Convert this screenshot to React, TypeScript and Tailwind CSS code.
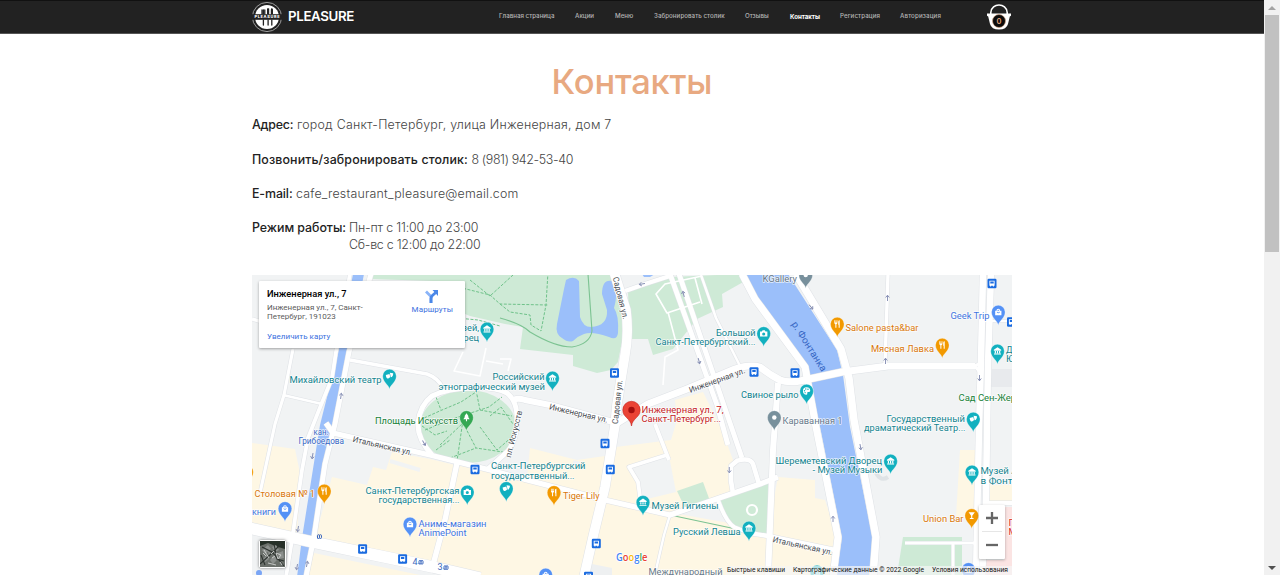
import React from 'react';

const TEAL = '#12838f';
const ORANGE = '#d9770a';
const BLUE = '#3f74e0';
const GREY = '#66788a';

type PinKind = 'museum' | 'theatre' | 'camera' | 'food' | 'bag' | 'tree' | 'dot' | 'palette' | 'drink';
type PinProps = { x: number; y: number; fill: string; kind: PinKind };

const glyphs: Record<PinKind, React.ReactNode> = {
  museum: (
    <g>
      <path d="M-4-1.4 0-4 4-1.4V-.4H-4Z" />
      <path d="M-3 0h1.3v2.4H-3zM-.65 0h1.3v2.4h-1.3zM1.7 0H3v2.4H1.7zM-3.8 2.8h7.6v1h-7.6z" />
    </g>
  ),
  theatre: (
    <g>
      <path d="M-4-1.2 0-2.2.8 1.2Q-.8 3.6-2.8 2.4-3.8 1.2-4-1.2Z" />
      <path d="M.2-3.6 4-3Q4 1 1.4 1.4L.6-2.4Z" />
    </g>
  ),
  camera: <path fillRule="evenodd" d="M-4-2.2h2l.8-1.2h2.4L2-2.2h2v5.4h-8ZM0-1.2A1.7 1.7 0 1 0 0 2.2 1.7 1.7 0 0 0 0-1.2Z" />,
  food: <path d="M-3.2-4h.7v2.4h.6V-4h.7v2.4h.6V-4h.7v3q0 1-1.1 1.3V4h-1.1V.3Q-3.2 0-3.2-1ZM1-2.4Q1.2-4 2.6-4v8H1.5V.8H1Z" />,
  bag: <path fillRule="evenodd" d="M-3.4-1.4H-2A2 2 0 0 1 2-1.4h1.4v4.8h-6.8ZM-1-1.4h2A1 1 0 0 0-1-1.4ZM-1.8 0q1.8 2.6 3.6 0l-.7-.2Q0 1.3-1.1-.2Z" />,
  tree: <path d="M0-4.6 2.4-1H1.5L3.4 2H.6v2H-.6V2h-2.8L-1.5-1h-.9Z" />,
  dot: <circle r="2.4" />,
  palette: (
    <g>
      <path d="M0-4A4 4 0 0 0 0 4Q1.4 3.600.6 2.200.6 1 2.200 1.200 4 1.200 4-.4 3.600-4 0-4Z" />
      <g fill="#12b0bf"><circle cx="-2.300" cy="-.2" r=".8" /><circle cx="-.9" cy="-2.200" r=".8" /><circle cx="1.500" cy="-2" r=".8" /><circle cx="-1.600" cy="1.800" r=".7" /></g>
    </g>
  ),
  drink: <path d="M-3.4-3.6h6.8L.6.2v2.6H2v1h-4v-1h1.4V.2Z" />,
};

function Pin({ x, y, fill, kind }: PinProps) {
  return (
    <g transform={`translate(${x} ${y})`}>
      <path d="M0 13.2C-.8 8.6-6.8 6.4-6.8 0a6.8 6.8 0 0 1 13.6 0C6.8 6.4.8 8.6 0 13.2Z" fill={fill} stroke="#fff" strokeOpacity=".6" strokeWidth=".5" />
      <g fill="#fff" transform="scale(.92)">{glyphs[kind]}</g>
    </g>
  );
}

const P = '#12b0bf';
const O = '#f29900';
const B = '#5491f5';
const pins: PinProps[] = [
  { x: 389.5, y: 376, fill: P, kind: 'theatre' },
  { x: 487, y: 329, fill: P, kind: 'museum' },
  { x: 552.5, y: 378, fill: P, kind: 'museum' },
  { x: 466.5, y: 417.5, fill: '#34a853', kind: 'tree' },
  { x: 763.7, y: 333.5, fill: P, kind: 'camera' },
  { x: 837.3, y: 324, fill: O, kind: 'food' },
  { x: 942.3, y: 345, fill: O, kind: 'food' },
  { x: 805.7, y: 275, fill: '#78909c', kind: 'dot' },
  { x: 998.3, y: 312, fill: B, kind: 'bag' },
  { x: 997.5, y: 351, fill: P, kind: 'museum' },
  { x: 806.6, y: 391, fill: P, kind: 'palette' },
  { x: 774.3, y: 417.5, fill: '#78909c', kind: 'dot' },
  { x: 973.3, y: 419, fill: P, kind: 'theatre' },
  { x: 890.6, y: 461, fill: P, kind: 'museum' },
  { x: 972, y: 472, fill: P, kind: 'museum' },
  { x: 971.7, y: 515.5, fill: O, kind: 'drink' },
  { x: 324.3, y: 491, fill: O, kind: 'food' },
  { x: 246.5, y: 472, fill: O, kind: 'food' },
  { x: 285, y: 508.5, fill: B, kind: 'bag' },
  { x: 467.3, y: 492, fill: P, kind: 'camera' },
  { x: 410, y: 524, fill: B, kind: 'bag' },
  { x: 506.3, y: 488.5, fill: P, kind: 'theatre' },
  { x: 554, y: 492.5, fill: O, kind: 'food' },
  { x: 643, y: 502.3, fill: P, kind: 'museum' },
  { x: 749, y: 528, fill: P, kind: 'museum' },
  { x: 545.7, y: 575, fill: B, kind: 'bag' },
  { x: 968.5, y: 569.5, fill: B, kind: 'bag' },
  { x: 817, y: 572, fill: P, kind: 'museum' },
];

/* text, x, baseline, drawn width, colour */
const labels: [string, number, number, number, string][] = [
  ['Михайловский театр', 289.5, 382.5, 92, TEAL],
  ['Музей,', 450, 331, 29, TEAL],
  ['Дворец', 446, 340.5, 33, TEAL],
  ['Российский', 492.5, 380.2, 52, TEAL],
  ['этнографический музей', 438.5, 389.5, 106.5, TEAL],
  ['Площадь Искусств', 375, 424.2, 83, '#188038'],
  ['Большой', 716, 335.8, 39.5, TEAL],
  ['Санкт-Петербургский...', 655.5, 345, 100, TEAL],
  ['KGallery', 762.5, 282, 34.5, GREY],
  ['Salone pasta&bar', 845.5, 331, 73, ORANGE],
  ['Мясная Лавка', 871, 352, 63, ORANGE],
  ['Geek Trip', 950.5, 318.7, 39, BLUE],
  ['Д', 1006, 352.7, 6.5, TEAL],
  ['Ю', 1006, 362, 9, TEAL],
  ['Свиное рыло', 741, 397.5, 57.5, TEAL],
  ['Караванная 1', 782.5, 424, 60, GREY],
  ['Сад Сен-Жермен', 958.5, 401, 75, '#188038'],
  ['Государственный', 886.5, 421.5, 78.5, TEAL],
  ['драматический Театр...', 864, 430.5, 101.5, TEAL],
  ['Шереметевский Дворец', 775.5, 463.5, 106.5, TEAL],
  ['- Музей Музыки', 812.5, 472.7, 70, TEAL],
  ['Музей А', 980.5, 474.3, 37, TEAL],
  ['в Фонтан', 980.5, 483.7, 43, TEAL],
  ['Union Bar', 923, 522.2, 40.5, ORANGE],
  ['П', 1008.5, 525.5, 7, '#d93025'],
  ['М', 1008.5, 535, 8, '#d93025'],
  ['Столовая № 1', 254.5, 497, 60.5, ORANGE],
  ['книги', 252, 514.7, 24, BLUE],
  ['Санкт-Петербургская', 365.5, 494, 94, TEAL],
  ['государственная...', 378.5, 503.3, 81, TEAL],
  ['Аниме-магазин', 418.5, 526.5, 68, BLUE],
  ['AnimePoint', 418.5, 535.7, 48, BLUE],
  ['Санкт-Петербургский', 491, 469, 94.5, TEAL],
  ['государственный...', 491, 478.5, 83.5, TEAL],
  ['Tiger Lily', 563, 499.2, 36.5, ORANGE],
  ['Музей Гигиены', 651.5, 509, 67, TEAL],
  ['Русский Левша', 673, 534.7, 67.5, TEAL],
  ['Международный', 648.5, 575.3, 74, '#66788a'],
  ['Инженерная ул., 7,', 641.5, 412.7, 82, '#c5221f'],
  ['Санкт-Петербург...', 641.5, 422, 79.5, '#c5221f'],
];

/* text, centre x, centre y, rotation, drawn width */
const streets: [string, number, number, number, number][] = [
  ['Садовая ул.', 620.5, 298, 76, 43],
  ['Садовая ул.', 617.5, 402, -84, 44],
  ['Инженерная ул.', 578.5, 413.5, 13, 60],
  ['Инженерная ул.', 717, 380.5, -20, 59],
  ['Итальянская ул.', 382.5, 446, 13, 61],
  ['Итальянская ул.', 802.5, 546, 12.5, 61],
  ['пл. Искусств', 514, 434, -76, 48],
];

/* Buses and tram stops */
const stops: [number, number][] = [
  [614.5, 373], [754, 372], [795, 373], [992, 283.5], [1011.5, 322], [475, 469.5], [605, 443.5],
  [610.3, 469.5], [362.6, 549], [402.6, 559], [596.3, 543.5], [588.5, 576.5],
];

const arrows: [number, number, number][] = [
  [811, 307, 140], [887.5, 298, 0], [885.5, 361, 0], [979.5, 378, 180], [642, 284, 260],
  [683.5, 294, -15], [699, 361, 165], [341, 396, 8], [312.5, 456, 190], [298, 529, 190],
  [307, 564, 10], [297, 567, 190], [729.3, 470, 180], [860.5, 447, 170], [833, 519, 0], [424, 443, 150],
];

const roads: [string, number][] = [
  ['M350 274 336 352 332 378 319 410 308 438 302 470 292 540 286 577', 3.8],
  ['M371 274 349 352 335 424 325 464 314 537 306 577', 5],
  ['M293 349 284 395 275 424 260 493', 3.2],
  ['M283 395 322 404', 2.6],
  ['M252 319 262 322', 3.4],
  ['M350 360 427 374Q438 378 443 388', 3.6],
  ['M432 455Q417 438 418 423 420 405 432 396 448 388 472 388 496 387 507 393 516 400 517 415 518 438 508 451 496 462 488 469', 5],
  ['M513 401Q516 397 525 400L550 405 617 423', 6],
  ['M617 423 648 404 687 389 735 369Q750 364 760 367 770 375 780 380 788 383 800 381L842 372 888 366H975', 7],
  ['M972 366Q979 366 983 359M972 366Q978 367 980 374', 3],
  ['M326 423 333 433 364 440 430 455 490 470 527 480 605 500 670 515 760 484 778 477', 5.2],
  ['M457 463 445 520 433 565', 5.4],
  ['M249 528 317 543 380 556 433 567 480 578', 11.5],
  ['M614 272 626 310Q629 335 625 355L617 404 615 425 605 487 593 537 584 577', 9.5],
  ['M670 274 717 405 728 445', 5],
  ['M679 274 730 423 742 458', 5],
  ['M625 291 645 284 670 276', 4.4],
  ['M701 275 716 318 740 366', 2.6],
  ['M742 274 755 299 805 367 816 427 838 537 833 577', 7],
  ['M796 274 841 349 849 378 854 420 876 537 873 577', 7.4],
  ['M888 274 885 364', 3.4],
  ['M778 383 773 450 768 577', 6],
  ['M983 274 981 360 979 430 976 577', 6.5],
  ['M991 274 988 365 987 430 986 500 982 577', 6.5],
  ['M984 503H1013', 4],
  ['M983 321H1013', 2.3],
  ['M738 460 731 466 731 481 733 493M736 461Q750 457 753 464L759 484', 4.6],
  ['M669 460 655 424M667 455 629 467 638 482 641 504', 3.8],
  ['M718 500Q726 522 734 527L749 533', 4],
  ['M670 515 664 535 656 570', 2.4],
  ['M749 533 768 536 835 550', 4.4],
  ['M905 543H974M953 543V575', 3],
];

const parkPaths =
  'M457 318 478 320 500 326M450 285 490 295 500 304 548 305M500 304 510 312 530 315 531 325 541 331M548 272 546 305 541 331M470 280 490 296 513 275M424 418 442 410 461 402 476 392M436 397 441 410M425 430 458 417 480 410 512 416M440 445 463 423 476 448 503 452M463 420 457 461M476 390 480 410 489 407 502 397M450 458 476 448M422 426 435 435 447 431M480 427 497 450 513 436M490 416 501 407 513 424M436 450 450 440';

function MapCanvas() {
  return (
    <svg className="block h-[300px] w-[760px]" viewBox="252 275 760 300" fontFamily="Roboto, sans-serif">
      <rect x="252" y="275" width="760" height="300" fill="#f1f3f4" />
      <g fill="#fef7e4">
        <path d="M252 443 274 446 295 449 301 478 297 533 252 525Z" />
        <path d="M332 477 367 485 373 467 386 470 392 452 430 459 455 465 490 472 527 476 530 448 577 460 612 455 616 447 671 440 677 420 675 400 703 392 722 430 733 460 731 492 665 514 600 500 600 577 480 577 314 541Z" />
        <path d="M600 500 768 530 778 477 815 480 815 498 825 500 838 540 833 577 560 577Z" />
        <path d="M314 553 420 575H305Z" />
        <path d="M960 450H976L974 517H956Z" />
        <path d="M988 485H1012V502H988Z" />
      </g>
      <path d="M630 467 669 456 676 492 643 500Z" fill="#f1f3f4" />
      <path d="M390 461 420 470M573 462 580 464" stroke="#f1f3f4" strokeWidth="4" />
      <path d="M592 564 612 568V575H589Z" fill="#eef0f1" />
      <path d="M1004 507H1012V575H983V560H1004Z" fill="#fbe4e3" />
      <path d="M992 369H1012V387H991Z" fill="#e8eaed" />
      <g fill="#ceead6">
        <path d="M374 274H614L627 315 618 362 611 370 597 373 573 366V355L520 349 523 327 505 324 470 316 455 310 464 282 372 279Z" />
        <path d="M628 292 670 277 740 274 745 281 722 294 723 307 697 319 673 349 653 355 648 339 630 339Z" />
        <path d="M677 491 703 482 710 501 687 512Z" />
        <path d="M720 499 771 482 768 535 731 527Z" />
        <path d="M903 537H962V575H897Z" />
        <ellipse cx="468" cy="426.5" rx="48" ry="36.5" />
      </g>
      <path d={parkPaths} fill="none" stroke="#6fc28a" strokeWidth="1" strokeDasharray="3 1.5" />
      <g fill="#9bbffa">
        <path d="M353 274H364L349 350 336 427 325 475 315 540 306 577H297L302 538 320 425 339 349Z" />
        <path d="M745 274H788L837 350 843 375 850 427 873 539 869 577H836L842 538 820 427 808 371 755 295Z" />
        <path d="M566 280Q574 275 579 281L580 317Q583 327 591 327 608 326 607 310L602 294Q602 279 612 281 619 290 614 308 619 315 618 333 617 341 609 337 592 331 584 334 578 336 573 341 568 343 562 338 555 334 557 324L564 289Z" />
        <path d="M642 274H655L650 277H644Z" />
      </g>
      <path d="M500 318Q522 324 530 332 555 347 572 347 590 344 592 331L588 274M670 515 736 529" fill="none" stroke="#7cc392" strokeWidth="1.1" />
      <g fill="none" strokeLinejoin="round">
        {roads.map(([d, w]) => <path key={d} d={d} stroke="#dfe2e6" strokeWidth={w + 1} />)}
        {roads.map(([d, w]) => <path key={d} d={d} stroke="#fff" strokeWidth={w} />)}
        <path d="M700 302 667 313 656 294 665 284 702 276M668 312 678 350 665 357 663 385M695 278 702 304M463 352 454 371 480 376 486 348M486 361 503 364M500 359H511L508 371" stroke="#fff" strokeWidth="1.6" />
        <circle cx="752" cy="510" r="5" stroke="#fff" strokeWidth="2.2" />
        <path d="M876 473Q881 482 888 477" stroke="#dfe3e6" strokeWidth="4" />
      </g>
      <g fill="none" stroke="#8089b0" strokeWidth=".9">
        {arrows.map(([x, y, r]) => (
          <path key={`${x}-${y}`} d="M0 3V-2.5M-1.8-.5 0-2.8 1.8-.5" transform={`translate(${x} ${y}) rotate(${r})`} />
        ))}
      </g>
      {stops.map(([x, y]) => (
        <g key={`${x}-${y}`} transform={`translate(${x} ${y})`}>
          <rect x="-4.5" y="-4.7" width="9" height="9.4" rx="1.2" fill="#1a6be0" />
          <path fillRule="evenodd" d="M-2.6-2.8h5.2v5h-.7v.9h-1v-.9H-.9v.9h-1v-.9h-.7ZM-1.7-1.9v1.8h3.4v-1.8Z" fill="#fff" />
        </g>
      ))}
      <g stroke="#fff" strokeWidth="1.6" strokeOpacity=".75" strokeLinejoin="round" paintOrder="stroke">
        <g fontSize="8.3" fill="#4a4e54">
          {streets.map(([t, x, y, r, w]) => (
            <text key={`${t}-${x}`} textLength={w} lengthAdjust="spacingAndGlyphs" textAnchor="middle" transform={`translate(${x} ${y}) rotate(${r})`} dy="2.6">{t}</text>
          ))}
        </g>
        <g fontSize="9.7">
          {labels.map(([t, x, y, w, c]) => (
            <text key={`${t}-${x}`} x={x} y={y} textLength={w} lengthAdjust="spacingAndGlyphs" fill={c}>{t}</text>
          ))}
        </g>
        <g fontSize="8.500" fill="#3767c4">
          <text x="313.5" y="435" textLength="15" lengthAdjust="spacingAndGlyphs">кан.</text>
          <text x="298.5" y="443.5" textLength="45.5" lengthAdjust="spacingAndGlyphs">Грибоедова</text>
        </g>
      </g>
      <text fontSize="9.8" fill="#3767c4" textLength="57" lengthAdjust="spacingAndGlyphs" textAnchor="middle" transform="translate(809 346.500) rotate(58)" dy="3">р. Фонтанка</text>
      <g fill="#3b67bd">
        <text x="412.5" y="565" fontSize="9">4</text>
        <text x="437.5" y="570" fontSize="9">3</text>
      </g>
      <g fill="none" stroke="#3b67bd" strokeWidth="1">
        {[[319.5, 536.5], [421, 562.2], [446, 567.5]].map(([x, y]) => (
          <path key={x} d="M-2 1.900V-.8a1 1 0 0 1 2 0V1a1 1 0 0 1-2 0M0 0V-.8a1 1 0 0 1 2 0V1a1 1 0 0 1-2 0" transform={`translate(${x} ${y})`} />
        ))}
      </g>
      <circle cx="259" cy="573" r="3" fill="#7aa5f5" />
      {pins.map((p) => <Pin key={`${p.x}-${p.y}`} {...p} />)}
      <path d="M631.5 426C630.5 418 622.8 417.5 622.8 410a8.7 8.7 0 0 1 17.4 0C640.2 417.5 632.5 418 631.5 426Z" fill="#ea4335" stroke="#c5221f" strokeWidth=".6" />
      <circle cx="631.5" cy="410" r="3.2" fill="#a50e0e" />
      <g fontSize="11" fontFamily="'Open Sans', sans-serif" fontWeight="600" stroke="#fff" strokeWidth="1.6" paintOrder="stroke" strokeLinejoin="round">
        <text x="616" y="560.500" textLength="31.5" lengthAdjust="spacingAndGlyphs">
          <tspan fill="#4285f4">G</tspan><tspan fill="#ea4335">o</tspan><tspan fill="#fbbc04">o</tspan><tspan fill="#4285f4">g</tspan><tspan fill="#34a853">l</tspan><tspan fill="#ea4335">e</tspan>
        </text>
      </g>
      <path d="M726 566H1012V575H726Z" fill="#f5f5f5" fillOpacity=".7" />
      <g fontSize="6.6" fill="#111">
        <text x="727" y="572" textLength="58" lengthAdjust="spacingAndGlyphs">Быстрые клавиши</text>
        <text x="793" y="572" textLength="131" lengthAdjust="spacingAndGlyphs">Картографические данные © 2022 Google</text>
        <text x="932" y="572" textLength="76" lengthAdjust="spacingAndGlyphs">Условия использования</text>
      </g>
    </svg>
  );
}

function PlaceCard() {
  return (
    <section className="absolute left-[7px] top-[6px] flex h-[67px] w-[206px] justify-between rounded-[1px] bg-white pl-2 pr-3 pt-[5px] font-['Roboto',sans-serif] shadow-[0_1px_3px_rgba(0,0,0,0.35)]">
      <div className="whitespace-nowrap text-[8px] leading-[9px]">
        <h2 className="text-[9.300px] font-medium leading-[15px] text-black">Инженерная ул., 7</h2>
        <p className="mt-[2px] text-[#5b5b5b]">Инженерная ул., 7, Санкт-<br />Петербург, 191023</p>
        <a className="mt-[11px] block tracking-[0.050px] text-[#3a6fe0]">Увеличить карту</a>
      </div>
      <a className="flex flex-col items-center pt-[4px] text-[8px] leading-[9px] tracking-[0.100px] text-[#3a6fe0]">
        <svg className="mb-[2px] h-[13px] w-[14px]" viewBox="0 0 14 13">
          <path d="M1 1.5 6 6.5V13" fill="none" stroke="#8ab4f8" strokeWidth="2.8" />
          <path d="M6 13V8.5Q6 6.8 7.4 5.5L10.5 2.8" fill="none" stroke="#4a87e8" strokeWidth="2.8" />
          <path d="M7.5 0H13V6Z" fill="#4a87e8" />
        </svg>
        Маршруты
      </a>
    </section>
  );
}

function SatelliteThumb() {
  return (
    <div className="absolute bottom-[7px] left-[7px] rounded-[2px] border border-white bg-white shadow-[0_0_3px_rgba(0,0,0,0.5)]">
      <svg className="block h-[26px] w-[25px]" viewBox="0 0 25 26">
        <rect width="25" height="26" fill="#6b706b" />
        <path d="M0 0H25V8L18 6 8 2 0 5Z" fill="#263028" />
        <path d="M2 9 8 4 11 8 5 13ZM12 6 16 4 19 9 15 11ZM3 18 7 14 9 18 5 21ZM10 19 14 14 17 19 13 23ZM18 12 23 10 24 17 19 18ZM8 10 11 12 9 15" fill="#8c908d" />
        <path d="M2 6 12 11 24 25M0 23 12 12 21 3M1 14 5 24M14 3 17 18 24 20" stroke="#2d332f" strokeWidth="1.1" fill="none" />
        <path d="M4 9 9 17M16 12 21 14 18 18ZM8 22 16 24M11 13 14 10M20 21 22 24M3 12 6 15M12 17 15 15" stroke="#d0d2d0" strokeWidth=".9" fill="none" />
      </svg>
    </div>
  );
}

function ZoomButtons() {
  return (
    <div className="absolute left-[727px] top-[230px] flex h-[54px] w-[26px] flex-col items-center rounded-[1px] bg-white shadow-[0_1px_3px_rgba(0,0,0,0.3)]">
      <button className="grid h-[26px] w-full place-items-center">
        <svg className="h-3 w-3" viewBox="0 0 12 12"><path d="M0 6H12M6 0V12" stroke="#666" strokeWidth="2.3" /></svg>
      </button>
      <span className="h-px w-5 bg-[#e6e6e6]" />
      <button className="grid h-[26px] w-full place-items-center">
        <svg className="h-3 w-3" viewBox="0 0 12 12"><path d="M0 6H12" stroke="#666" strokeWidth="2.3" /></svg>
      </button>
    </div>
  );
}

function Logo() {
  return (
    <svg className="h-[32px] w-[32px]" viewBox="-16 -16 32 32">
      <circle r="14.6" fill="#222" stroke="#aaa" strokeWidth=".9" />
      <circle r="12" fill="#fff" />
      <g stroke="#222" strokeWidth="1.3" strokeLinecap="round">
        <path d="M-5-7V-3M-3.6-7V-3M-2.2-7V-3M1.1-8V-3M4.8-8V-3M-3.6 3V8M1.1 3V8M4.8 3V8" />
      </g>
      <path d="M0-8.5h2.2V-3H0ZM3.8-7.5Q5-9.5 6-7.5V-3H3.8Z" fill="#222" />
      <rect x="-15.5" y="-2.800" width="31" height="5.600" fill="#222" />
      <text textAnchor="middle" y="1.400" fontSize="3.900" fontWeight="800" fill="#fff" textLength="25" fontFamily="Inter, sans-serif">PLEASURE</text>
    </svg>
  );
}

function Basket() {
  return (
    <svg className="h-[28px] w-[26px]" viewBox="0 0 26 28">
      <path d="M4.8 11V9.5C5.500-.5 20.500-.5 21.2 9.5V11" fill="none" stroke="#fff" strokeWidth="1.6" />
      <path d="M1 10.500H25V12.700L23.8 13.500 22 21Q20.5 26.500 13 26.500 5.500 26.500 4 21L2.200 13.500 1 12.700Z" fill="#fff" />
      <circle cx="13" cy="18" r="6.500" fill="#0b0b0b" stroke="#d9a17e" strokeWidth=".6" />
      <text x="13" y="20.700" textAnchor="middle" fontSize="7.500" fontWeight="600" fill="#e8a77d" fontFamily="Inter, sans-serif">0</text>
    </svg>
  );
}

function Header() {
  return (
    <header className="h-[34px] border-b border-t border-b-[#555] border-t-[#111] bg-[#222]">
      <div className="ml-[251px] flex h-[31px] w-[761px] items-center">
        <Logo />
        <span className="ml-[5px] w-[211px] text-[13.3px] font-semibold tracking-[-0.35px] text-white">PLEASURE</span>
        <nav className="flex items-center whitespace-nowrap text-[6.200px] font-medium leading-none text-[#b5b5b5]">
          <a className="w-[76px]">Главная страница</a>
          <a className="w-[40px]">Акции</a>
          <a className="w-[39px]">Меню</a>
          <a className="w-[91px] tracking-[0.040px]">Забронировать столик</a>
          <a className="w-[45px]">Отзывы</a>
          <a className="w-[50px] pt-px font-bold tracking-[-0.050px] text-white">Контакты</a>
          <a className="w-[60px] tracking-[0.080px]">Регистрация</a>
          <a className="w-[42px] tracking-[0.120px]">Авторизация</a>
        </nav>
        <div className="ml-auto"><Basket /></div>
      </div>
    </header>
  );
}

function Contacts() {
  return (
    <div className="whitespace-nowrap text-[12.4px] leading-[17px] text-[#444]">
      <p><b className="font-medium tracking-[-0.2px] text-[#222]">Адрес:</b> <span className="font-light tracking-[0.240px]">город Санкт-Петербург, улица Инженерная, дом 7</span></p>
      <p className="mt-[17.500px]"><b className="font-medium tracking-[0.120px] text-[#222]">Позвонить/забронировать столик:</b> <span className="font-light tracking-[-0.350px]">8 (981) 942-53-40</span></p>
      <p className="mt-[17px]"><b className="font-medium tracking-[-0.1px] text-[#222]">E-mail:</b> <span className="font-light tracking-[0.200px]">cafe_restaurant_pleasure@email.com</span></p>
      <div className="mt-[17.500px] flex">
        <b className="w-[97px] font-medium tracking-[-0.050px] text-[#222]">Режим работы:</b>
        <p className="font-light tracking-[-0.170px]"><span>Пн-пт с 11:00 до 23:00</span><br /><span className="tracking-[-0.250px]">Сб-вс с 12:00 до 22:00</span></p>
      </div>
    </div>
  );
}

export default function App() {
  return (
    <div className="flex h-[575px] w-[1280px] overflow-hidden bg-white font-['Inter',sans-serif]">
      <div className="w-[1264px]">
        <Header />
        <main className="ml-[252px] w-[760px]">
          <h1 className="h-[82px] pt-[25px] text-center text-[34.500px] font-medium leading-[46px] tracking-[-0.200px] text-[#e8a981]">Контакты</h1>
          <Contacts />
          <div className="relative mt-[22px] h-[300px] overflow-hidden">
            <MapCanvas />
            <PlaceCard />
            <SatelliteThumb />
            <ZoomButtons />
          </div>
        </main>
      </div>
      <aside className="flex h-full w-4 flex-col items-center justify-between bg-[#f1f1f1]">
        <div className="flex w-full flex-col items-center">
          <svg className="h-[15px] w-[8px]" viewBox="0 0 8 15"><path d="M0 10 4 6 8 10Z" fill="#a3a3a3" /></svg>
          <span className="h-[237px] w-[14px] bg-[#c1c1c1]" />
        </div>
        <svg className="h-[15px] w-[8px]" viewBox="0 0 8 15"><path d="M0 6 4 10 8 6Z" fill="#505050" /></svg>
      </aside>
    </div>
  );
}
